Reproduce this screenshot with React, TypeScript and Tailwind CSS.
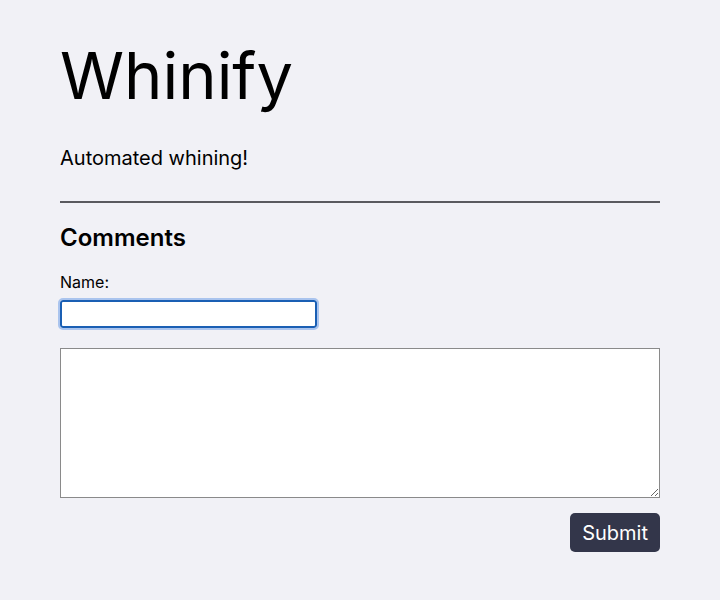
export default function App() {
  return (
    <div className="min-h-[600px] w-full bg-[#f1f1f6] font-['Inter',sans-serif] text-black">
      <div className="mx-auto w-[600px] pt-[36px]">
        <h1 className="text-[65px] leading-[80px] font-normal">Whinify</h1>
        <p className="mt-[28px] text-[20px] leading-[28px]">Automated whining!</p>
        <hr className="mt-[29px] border-t-2 border-[#5a5a5f]" />
        <h2 className="mt-[19px] text-[24px] leading-[32px] font-semibold">Comments</h2>
        <form className="mt-[18px] flex flex-col">
          <label className="text-[16px] leading-[20px]">Name:</label>
          <input
            autoFocus
            type="text"
            className="mt-[8px] h-[28px] w-[257px] rounded-[3px] border-2 border-[#1a5fb4] bg-white px-1 outline outline-2 outline-[#aac4ee]"
          />
          <textarea className="mt-[20px] h-[150px] w-full resize-y border border-[#8a8a8a] bg-white" />
          <div className="mt-[15px] flex justify-end">
            <button
              type="button"
              className="h-[39px] rounded-[5px] bg-[#33364a] px-[12px] text-[20px] text-white"
            >
              Submit
            </button>
          </div>
        </form>
      </div>
    </div>
  );
}
